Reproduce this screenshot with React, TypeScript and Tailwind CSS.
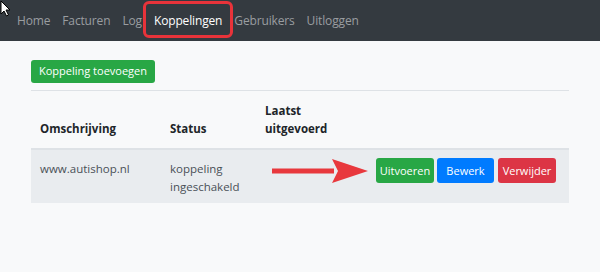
const navItems = ["Home", "Facturen", "Log", "Koppelingen", "Gebruikers", "Uitloggen"]

const App = () => {
  return (
    <div className="relative min-h-[272px] bg-[#f8f9fa] font-['Open_Sans',sans-serif]">
      {/* mouse cursor */}
      <svg className="absolute left-0 top-0" width="12" height="17" viewBox="0 0 12 17">
        <path d="M1 1 L1 14 L4 11 L6.5 16 L8.5 15 L6 10 L10 10 Z" fill="#fff" stroke="#000" strokeWidth="1" />
      </svg>

      <nav className="flex h-[41px] items-center gap-[12px] bg-[#343a40] pl-[17px] text-[12px] tracking-[-0.15px]">
        {navItems.map((item) =>
          item === "Koppelingen" ? (
            <span key={item} className="relative text-white">
              {item}
              <span className="absolute -inset-x-[11px] -bottom-[8px] -top-[11px] rounded-[6px] border-[3px] border-[#e8333a]" />
            </span>
          ) : (
            <span key={item} className="text-[#9a9da0]">
              {item}
            </span>
          )
        )}
      </nav>

      <div className="pl-[31px] pt-[19px]">
        <button className="block h-[23px] w-[124px] rounded-[3px] bg-[#28a745] text-[11px] text-white">
          Koppeling toevoegen
        </button>

        <table className="mt-[7px] w-[538px] table-fixed border-collapse text-left text-[11.5px] leading-[18px]">
          <colgroup>
            <col className="w-[130px]" />
            <col className="w-[95px]" />
            <col className="w-[111px]" />
            <col className="w-[202px]" />
          </colgroup>
          <thead>
            <tr className="border-t border-b-2 border-t-[#dee2e6] border-b-[#dee2e6] text-[#212529]">
              <th className="px-[9px] pb-[10px] pt-[11px] align-bottom font-bold">Omschrijving</th>
              <th className="px-[9px] pb-[10px] pt-[11px] align-bottom font-bold">Status</th>
              <th className="px-[9px] pb-[10px] pt-[11px] align-bottom font-bold">
                Laatst
                <br />
                uitgevoerd
              </th>
              <th className="px-[9px] pb-[10px] pt-[11px] align-bottom"></th>
            </tr>
          </thead>
          <tbody>
            <tr className="bg-[#e9ecef] text-[#495057]">
              <td className="px-[9px] pb-[7px] pt-[10px] align-top">www.autishop.nl</td>
              <td className="px-[9px] pb-[7px] pt-[10px] align-top">
                koppeling
                <br />
                ingeschakeld
              </td>
              <td className="px-[9px] pb-[7px] pt-[10px] align-top"></td>
              <td className="px-[9px] pb-[7px] pt-[8px] align-top">
                <div className="flex gap-[3px] text-[11px]">
                  <button className="h-[25px] w-[58px] rounded-[3px] bg-[#28a745] text-white">Uitvoeren</button>
                  <button className="h-[25px] w-[57px] rounded-[3px] bg-[#007bff] text-white">Bewerk</button>
                  <button className="ml-[1px] h-[25px] w-[58px] rounded-[3px] bg-[#dc3545] text-white">Verwijder</button>
                </div>
              </td>
            </tr>
          </tbody>
        </table>
      </div>

      {/* annotation arrow */}
      <svg className="absolute left-[272px] top-[158px]" width="97" height="26" viewBox="0 0 97 26">
        <rect x="0" y="10.5" width="62" height="5" fill="#e8383d" />
        <polygon points="60,1 96,13 60,25 66,13" fill="#e8383d" />
      </svg>
    </div>
  )
}

export default App
